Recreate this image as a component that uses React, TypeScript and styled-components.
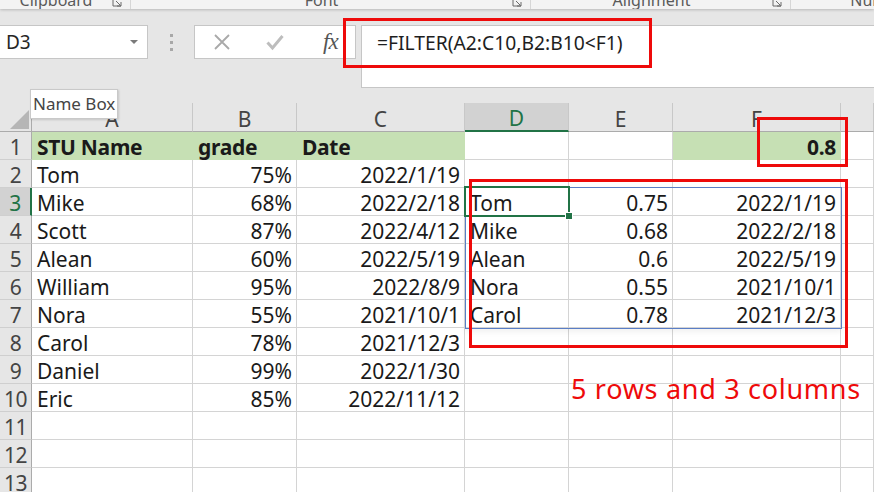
import styled, {createGlobalStyle} from 'styled-components';

const GREEN = '#217346';
const GRID = '#d4d4d4';
const RED = '#ee0a0a';
const HEAD_BG = '#e6e6e6';
const HEAD_ACTIVE = '#d2d2d2';
const COLS = [32, 161, 104, 168, 104, 104, 168, 33];

const GlobalStyle = createGlobalStyle`
  html, body {
    margin: 0;
    padding: 0;
    background: #ffffff;
  }
  body {
    font-family: "Noto Sans", "Open Sans", sans-serif;
    overflow: hidden;
  }
`;

const Screen = styled.div`
  position: relative;
  width: 874px;
  height: 492px;
  overflow: hidden;
  display: flex;
  flex-direction: column;
  background: #ffffff;
`;

/* ribbon strip (only the bottom of the group labels is visible) */
const Ribbon = styled.div`
  position: relative;
  z-index: 2;
  flex: none;
  height: 9px;
  display: flex;
  overflow: hidden;
  background: #f3f3f3;
  box-shadow: 0 1px 3px rgba(0, 0, 0, 0.2);
`;
const RibbonGroup = styled.div<{$width: number}>`
  flex: none;
  width: ${p => p.$width}px;
  box-sizing: border-box;
  display: flex;
  align-items: flex-end;
  padding-right: 8px;
  border-right: 1px solid #d6d6d6;
`;
const GroupLabel = styled.span`
  flex: 1;
  text-align: center;
  white-space: nowrap;
  font-size: 16px;
  line-height: 16px;
  color: #5a5a5a;
  margin-bottom: 1px;
`;
const Launcher = styled.svg`
  flex: none;
  margin-bottom: 2px;
`;

/* formula bar */
const FormulaArea = styled.div`
  flex: none;
  height: 94px;
  box-sizing: border-box;
  padding-top: 16px;
  background: ${HEAD_BG};
  display: flex;
  align-items: flex-start;
`;
const NameBox = styled.div`
  flex: none;
  width: 149px;
  height: 34px;
  margin-left: -1px;
  box-sizing: border-box;
  border: 1px solid #c6c6c6;
  background: #ffffff;
  display: flex;
  align-items: center;
  padding: 0 0 0 6px;
  font-size: 19px;
  line-height: 32px;
  color: #262626;
`;
const NameText = styled.span`
  flex: 1;
`;
const Caret = styled.span`
  width: 0;
  height: 0;
  margin-right: 9px;
  border-left: 4px solid transparent;
  border-right: 4px solid transparent;
  border-top: 4px solid #7a7a7a;
`;
const Grip = styled.div`
  flex: none;
  width: 46px;
  height: 34px;
  display: flex;
  flex-direction: column;
  align-items: center;
  justify-content: center;
  gap: 4px;
`;
const GripDot = styled.span`
  width: 3px;
  height: 3px;
  background: #a8a8a8;
`;
const FnBox = styled.div`
  flex: none;
  width: 162px;
  height: 34px;
  box-sizing: border-box;
  border: 1px solid #c6c6c6;
  background: #ffffff;
  display: grid;
  grid-template-columns: repeat(3, 1fr);
  align-items: center;
  justify-items: center;
`;
const FxLabel = styled.span`
  font-family: "Liberation Serif", "DejaVu Serif", serif;
  font-style: italic;
  font-size: 23px;
  line-height: 30px;
  color: #555555;
  letter-spacing: -1px;
  margin-left: 4px;
`;
const FormulaInput = styled.div`
  flex: 1;
  height: 63px;
  margin-left: 5px;
  box-sizing: border-box;
  border: 1px solid #c6c6c6;
  border-right: none;
  background: #ffffff;
  padding: 3px 0 0 15px;
  font-size: 19.3px;
  line-height: 28px;
  color: #1e1e1e;
  white-space: nowrap;
`;

/* worksheet */
const Sheet = styled.div`
  flex: none;
  display: grid;
  grid-template-columns: ${COLS.map(c => `${c}px`).join(' ')};
  grid-template-rows: 29px;
  grid-auto-rows: 28px;
  font-size: 21px;
  color: #1a1a1a;
`;
const Corner = styled.div`
  box-sizing: border-box;
  background: ${HEAD_BG};
  border-right: 1px solid #ababab;
  border-bottom: 1px solid #ababab;
  display: flex;
  align-items: flex-end;
  justify-content: flex-end;
  padding: 0 2px 2px 0;
`;
const CornerMark = styled.span`
  width: 0;
  height: 0;
  border-left: 19px solid transparent;
  border-bottom: 19px solid #b6b6b6;
`;
const ColHeader = styled.div<{$active?: boolean}>`
  box-sizing: border-box;
  background: ${p => (p.$active ? HEAD_ACTIVE : HEAD_BG)};
  color: ${p => (p.$active ? GREEN : '#444444')};
  border-right: 1px solid #c8c8c8;
  border-bottom: ${p => (p.$active ? `2px solid ${GREEN}` : '1px solid #ababab')};
  display: flex;
  align-items: flex-end;
  justify-content: center;
  line-height: ${p => (p.$active ? 23 : 24)}px;
`;
const RowHeader = styled.div<{$active?: boolean}>`
  box-sizing: border-box;
  background: ${p => (p.$active ? HEAD_ACTIVE : HEAD_BG)};
  color: ${p => (p.$active ? GREEN : '#444444')};
  border-right: ${p => (p.$active ? `2px solid ${GREEN}` : '1px solid #ababab')};
  border-bottom: 1px solid #cfcfcf;
  display: flex;
  align-items: flex-end;
  justify-content: center;
  line-height: 24px;
  letter-spacing: -0.5px;
  white-space: nowrap;
`;
const Cell = styled.div<{$right?: boolean; $bold?: boolean; $fill?: boolean}>`
  box-sizing: border-box;
  background: ${p => (p.$fill ? '#c6e0b4' : '#ffffff')};
  border-right: 1px solid ${p => (p.$fill ? '#c6e0b4' : GRID)};
  border-bottom: 1px solid ${p => (p.$fill ? '#c6e0b4' : GRID)};
  display: flex;
  align-items: flex-end;
  justify-content: ${p => (p.$right ? 'flex-end' : 'flex-start')};
  padding: 0 ${p => (p.$right ? 4 : 3)}px 0 ${p => (p.$right ? 3 : 5)}px;
  font-weight: ${p => (p.$bold ? 700 : 400)};
  letter-spacing: ${p => (p.$bold ? '-0.3px' : '0')};
  line-height: 24px;
  white-space: nowrap;
`;

/* overlays */
const FormulaCallout = styled.div`
  position: absolute;
  z-index: 5;
  left: 343px;
  top: 18px;
  width: 309px;
  height: 50px;
  box-sizing: border-box;
  border: 3px solid ${RED};
`;
const ThresholdCallout = styled.div`
  position: absolute;
  z-index: 5;
  left: 757px;
  top: 117px;
  width: 91px;
  height: 50px;
  box-sizing: border-box;
  border: 3px solid ${RED};
`;
const ResultCallout = styled.div`
  position: absolute;
  z-index: 5;
  left: 469px;
  top: 179px;
  width: 379px;
  height: 169px;
  box-sizing: border-box;
  border: 3px solid ${RED};
`;
const SpillRange = styled.div`
  position: absolute;
  z-index: 3;
  left: 465px;
  top: 187px;
  width: 377px;
  height: 142px;
  box-sizing: border-box;
  border: 1px solid #5a7ec6;
  box-shadow: 0 3px 6px rgba(0, 0, 0, 0.06);
`;
const ActiveCell = styled.div`
  position: absolute;
  z-index: 4;
  left: 464px;
  top: 186px;
  width: 106px;
  height: 31px;
  box-sizing: border-box;
  border: 2px solid ${GREEN};
`;
const FillHandle = styled.span`
  position: absolute;
  right: -5px;
  bottom: -5px;
  width: 6px;
  height: 6px;
  background: ${GREEN};
  border: 1px solid #ffffff;
`;
const Note = styled.div`
  position: absolute;
  z-index: 5;
  left: 571px;
  top: 374px;
  font-size: 27px;
  line-height: 30px;
  letter-spacing: 0.7px;
  color: ${RED};
  white-space: nowrap;
`;
const Tooltip = styled.div`
  position: absolute;
  z-index: 6;
  left: 30px;
  top: 89px;
  height: 30px;
  box-sizing: border-box;
  padding: 0 2px 0 2px;
  background: #ffffff;
  border: 1px solid #c9c9c9;
  box-shadow: 1px 1px 2px rgba(0, 0, 0, 0.15);
  font-size: 17px;
  line-height: 28px;
  color: #454545;
  white-space: nowrap;
`;

type CellDef = {text?: string; right?: boolean; bold?: boolean; fill?: boolean};

const L = (text: string): CellDef => ({text});
const R = (text: string): CellDef => ({text, right: true});
const E: CellDef = {};

const rows: CellDef[][] = [
  [
    {text: 'STU Name', bold: true, fill: true},
    {text: 'grade', bold: true, fill: true},
    {text: 'Date', bold: true, fill: true},
    E,
    E,
    {text: '0.8', bold: true, fill: true, right: true},
    E,
  ],
  [L('Tom'), R('75%'), R('2022/1/19'), E, E, E, E],
  [L('Mike'), R('68%'), R('2022/2/18'), L('Tom'), R('0.75'), R('2022/1/19'), E],
  [L('Scott'), R('87%'), R('2022/4/12'), L('Mike'), R('0.68'), R('2022/2/18'), E],
  [L('Alean'), R('60%'), R('2022/5/19'), L('Alean'), R('0.6'), R('2022/5/19'), E],
  [L('William'), R('95%'), R('2022/8/9'), L('Nora'), R('0.55'), R('2021/10/1'), E],
  [L('Nora'), R('55%'), R('2021/10/1'), L('Carol'), R('0.78'), R('2021/12/3'), E],
  [L('Carol'), R('78%'), R('2021/12/3'), E, E, E, E],
  [L('Daniel'), R('99%'), R('2022/1/30'), E, E, E, E],
  [L('Eric'), R('85%'), R('2022/11/12'), E, E, E, E],
  [E, E, E, E, E, E, E],
  [E, E, E, E, E, E, E],
  [E, E, E, E, E, E, E],
];

const columns = ['A', 'B', 'C', 'D', 'E', 'F', ''];

function LauncherIcon() {
  return (
    <Launcher width="10" height="10" viewBox="0 0 10 10">
      <path d="M1 1v8h8" fill="none" stroke="#6a6a6a" strokeWidth="1" />
      <path d="M4 4l4.5 4.5M5 9h4V5" fill="none" stroke="#6a6a6a" strokeWidth="1" />
    </Launcher>
  );
}

function App() {
  return (
    <Screen>
      <GlobalStyle />
      <Ribbon>
        <RibbonGroup $width={131}>
          <GroupLabel>Clipboard</GroupLabel>
          <LauncherIcon />
        </RibbonGroup>
        <RibbonGroup $width={400}>
          <GroupLabel>Font</GroupLabel>
          <LauncherIcon />
        </RibbonGroup>
        <RibbonGroup $width={260}>
          <GroupLabel>Alignment</GroupLabel>
          <LauncherIcon />
        </RibbonGroup>
        <RibbonGroup $width={190}>
          <GroupLabel>Number</GroupLabel>
        </RibbonGroup>
      </Ribbon>

      <FormulaArea>
        <NameBox>
          <NameText>D3</NameText>
          <Caret />
        </NameBox>
        <Grip>
          <GripDot />
          <GripDot />
          <GripDot />
        </Grip>
        <FnBox>
          <svg width="18" height="18" viewBox="0 0 18 18">
            <path d="M2 2L16 16M16 2L2 16" stroke="#a9a9a9" strokeWidth="1.8" />
          </svg>
          <svg width="18" height="18" viewBox="0 0 18 18">
            <path d="M1.5 9.5L6.5 15L16.5 3" fill="none" stroke="#bdbdbd" strokeWidth="3" />
          </svg>
          <FxLabel>fx</FxLabel>
        </FnBox>
        <FormulaInput>=FILTER(A2:C10,B2:B10&lt;F1)</FormulaInput>
      </FormulaArea>

      <Sheet>
        <Corner>
          <CornerMark />
        </Corner>
        {columns.map((c, i) => (
          <ColHeader key={`h${i}`} $active={c === 'D'}>
            {c}
          </ColHeader>
        ))}
        {rows.map((row, r) => [
          <RowHeader key={`r${r}`} $active={r === 2}>
            {r + 1}
          </RowHeader>,
          ...row.map((cell, c) => (
            <Cell key={`c${r}-${c}`} $right={cell.right} $bold={cell.bold} $fill={cell.fill}>
              {cell.text}
            </Cell>
          )),
        ])}
      </Sheet>

      <SpillRange />
      <ActiveCell>
        <FillHandle />
      </ActiveCell>
      <FormulaCallout />
      <ThresholdCallout />
      <ResultCallout />
      <Note>5 rows and 3 columns</Note>
      <Tooltip>Name Box</Tooltip>
    </Screen>
  );
}

export default App;
